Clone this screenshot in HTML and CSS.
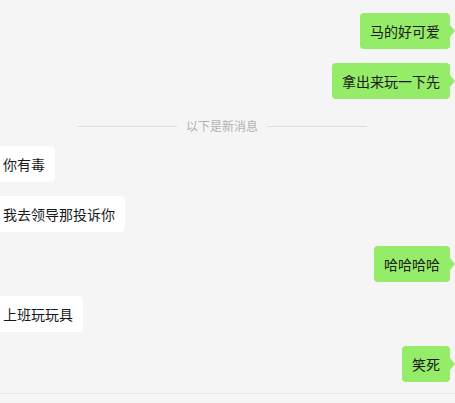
FILE: index.html
```html
<!DOCTYPE html>
<html lang="zh">
<head>
<meta charset="utf-8">
<title>聊天</title>
<link rel="stylesheet" href="styles.css">
</head>
<body>
<div class="chat">
  <div class="list">
    <div class="row right"><div class="bubble mine">马的好可爱</div></div>
    <div class="row right"><div class="bubble mine">拿出来玩一下先</div></div>
    <div class="divider"><span class="line"></span><span class="label">以下是新消息</span><span class="line"></span></div>
    <div class="row left"><div class="bubble other">你有毒</div></div>
    <div class="row left"><div class="bubble other">我去领导那投诉你</div></div>
    <div class="row right"><div class="bubble mine">哈哈哈哈</div></div>
    <div class="row left"><div class="bubble other">上班玩玩具</div></div>
    <div class="row right"><div class="bubble mine">笑死</div></div>
  </div>
  <div class="footer"></div>
</div>
</body>
</html>
```

FILE: styles.css
```css
html, body {
  margin: 0;
  padding: 0;
  background: #f5f5f5;
}
body {
  width: 455px;
  height: 403px;
  overflow: hidden;
  font-family: "Noto Sans CJK SC", "Noto Sans", sans-serif;
}
.chat {
  display: flex;
  flex-direction: column;
  height: 403px;
}
.list {
  padding-top: 6px;
  padding-bottom: 4px;
  display: flex;
  flex-direction: column;
}
.row {
  display: flex;
  height: 50px;
  align-items: flex-start;
  padding-top: 7px;
  box-sizing: border-box;
}
.row.right { justify-content: flex-end; }
.row.left { justify-content: flex-start; }
.bubble {
  position: relative;
  font-size: 14px;
  line-height: 20px;
  padding: 8px 10px;
  border-radius: 4px;
  color: #191919;
  white-space: nowrap;
}
.mine {
  background: #95ec69;
  margin-right: 5px;
}
.mine::after {
  content: "";
  position: absolute;
  right: -5px;
  top: 12px;
  border-top: 6px solid transparent;
  border-bottom: 6px solid transparent;
  border-left: 5px solid #95ec69;
}
.other {
  background: #ffffff;
  margin-left: -7px;
}
.divider {
  display: flex;
  align-items: center;
  justify-content: center;
  height: 33px;
  padding-top: 7px;
  padding-right: 11px;
  box-sizing: border-box;
}
.line {
  width: 100px;
  height: 1px;
  background: #dedede;
}
.label {
  font-size: 12px;
  line-height: 16px;
  color: #b2b2b2;
  margin: 0 9px;
}
.footer {
  flex: 1;
  border-top: 1px solid #e5e5e5;
  background: #f5f5f5;
}
```
